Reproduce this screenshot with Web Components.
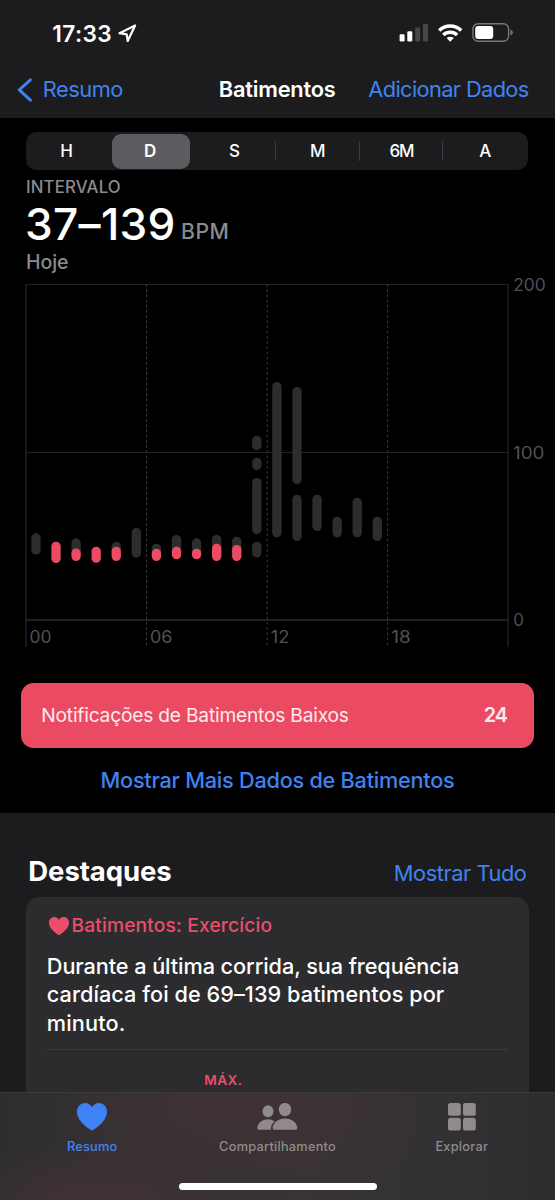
<!DOCTYPE html>
<html lang="pt-BR">
<head>
<meta charset="utf-8">
<title>Batimentos</title>
<style>
html,body{margin:0;background:#000}
body{font-family:Inter,"Liberation Sans",sans-serif;color:#fff;width:555px;height:1200px;overflow:hidden}
</style>
</head>
<body>
<health-screen></health-screen>
<script>
const define = (name, html, setup) => {
  const t = document.createElement('template');
  t.innerHTML = html;
  customElements.define(name, class extends HTMLElement {
    connectedCallback() {
      if (this.shadowRoot) return;
      this.attachShadow({mode: 'open'}).append(t.content.cloneNode(true));
      if (setup) setup.call(this, this.shadowRoot);
    }
  });
};

/* One line of text, tracked so its glyphs span exactly `w` pixels. */
const pen = document.createElement('canvas').getContext('2d');
define('ui-text', `<style>
:host{display:block;white-space:nowrap;flex:none}
span{display:inline-block}
</style><span></span>`, function (root) {
  const s = root.querySelector('span');
  const text = this.getAttribute('text'), size = this.getAttribute('size');
  const weight = this.getAttribute('weight') || 400, w = +this.getAttribute('w');
  pen.font = `${weight} ${size}px Inter, "Liberation Sans", sans-serif`;
  const m = pen.measureText(text);
  const ink = m.actualBoundingBoxLeft + m.actualBoundingBoxRight;
  s.textContent = text;
  s.style.cssText = `font-size:${size}px;font-weight:${weight};margin-left:${m.actualBoundingBoxLeft + .3}px;` +
    (text.length > 1 ? `letter-spacing:${(w - ink) / (text.length - 1)}px` : '');
  this.style.width = w + 'px';
});

define('status-bar', `<style>
:host{display:flex;height:60px;line-height:67px;padding-left:53px;box-sizing:border-box}
svg{display:block}
.loc{margin:23px 0 0 6px;width:21px;height:21px}
.right{margin:21px 0 0 auto;width:116px;height:24px;padding-right:40px}
</style>
<ui-text text="17:33" size="22.600" weight="600" w="58"></ui-text>
<svg class="loc" viewBox="117.500 23 21 21" fill="none" stroke="#fff" stroke-width="2.200" stroke-linejoin="round"><path d="M135.600 25.500 120 33.200 127.200 34.300 128.200 41Z"/></svg>
<svg class="right" viewBox="399 21 116 24">
<g fill="#fff"><rect x="399.600" y="34.300" width="5" height="7.300" rx="1.300"/><rect x="407.300" y="31.300" width="5" height="10.300" rx="1.300"/></g>
<g fill="#48484a"><rect x="415.200" y="27.500" width="5" height="14.100" rx="1.300"/><rect x="423" y="23.700" width="5" height="17.900" rx="1.300"/></g>
<g fill="none" stroke="#fff" stroke-width="3.500"><path d="M439.200 30.400a16 16 0 0 1 22 0"/><path d="M443.300 34.900a10 10 0 0 1 13.800 0"/></g>
<path fill="#fff" d="M446.600 38.100a5.200 5.200 0 0 1 7.200 0l-3.600 3.600z"/>
<rect x="472.900" y="23.700" width="35.700" height="17.600" rx="5.300" fill="none" stroke="#77777a" stroke-width="1.400"/>
<rect x="475.200" y="26" width="18" height="13" rx="3" fill="#fff"/>
<path d="M510.500 29.600q2.400.9 2.400 3t-2.400 3z" fill="#77777a"/>
</svg>`);

define('nav-bar', `<style>
:host{display:flex;height:58px;line-height:59.5px;padding:0 26.5px 0 17px;box-sizing:border-box}
svg{width:16px;height:26px;margin:16.500px 10.5px 0 0}
.link{color:#3f83f0}
.t{margin-left:97.500px}.r{margin-left:auto}
</style>
<svg viewBox="17 76.500 16 26" fill="none" stroke="#3f83f0" stroke-width="3" stroke-linecap="round" stroke-linejoin="round"><path d="M30.400 79.300 19.300 89.400 30.400 99.700"/></svg>
<ui-text class="link" text="Resumo" size="21.800" w="78.500"></ui-text>
<ui-text class="t" text="Batimentos" size="21.800" weight="600" w="116"></ui-text>
<ui-text class="link r" text="Adicionar Dados" size="21.800" w="160.500"></ui-text>`);

define('range-picker', `<style>
:host{display:grid;grid-template-columns:repeat(6,1fr);width:501.5px;height:38px;margin:14px 0 0 26px;background:#1c1c1f;border-radius:10.500px;line-height:38.600px}
.c{display:flex;justify-content:center;padding-right:1.500px}
.sel{background:#5b5b60;border-radius:9px;margin:2px 3.500px 3px 2px;line-height:34.600px;padding-right:0}
.d{position:relative}
.d::after{content:"";position:absolute;right:.6px;top:9px;height:20px;width:1px;background:#3b3b3f}
</style>
<div class="c"><ui-text text="H" size="17" weight="450" w="12"></ui-text></div>
<div class="c sel"><ui-text text="D" size="17" weight="600" w="12"></ui-text></div>
<div class="c d"><ui-text text="S" size="17" weight="450" w="11"></ui-text></div>
<div class="c d"><ui-text text="M" size="17" weight="450" w="14"></ui-text></div>
<div class="c d"><ui-text text="6M" size="17" weight="450" w="24.500"></ui-text></div>
<div class="c"><ui-text text="A" size="17" weight="450" w="12"></ui-text></div>`);

define('range-summary', `<style>
:host{display:block;padding-left:26.700px;height:114px;box-sizing:border-box;color:#8b8b90}
.a{line-height:34.600px;height:30px}
.b{display:flex;height:46px;line-height:48px;color:#fff}
.u{color:#8b8b90;line-height:63px;margin-left:8.500px}
.c{line-height:32px;height:32px}
</style>
<div class="a"><ui-text text="INTERVALO" size="16.800" weight="500" w="92.800"></ui-text></div>
<div class="b"><ui-text text="37–139" size="44.200" weight="500" w="146.500"></ui-text><ui-text class="u" text="BPM" size="21.200" weight="500" w="45.500"></ui-text></div>
<div class="c"><ui-text text="Hoje" size="19.500" weight="500" w="41"></ui-text></div>`);

/* Hourly pulse ranges: [hour, top, bottom, isLow]. */
const RANGES = [[0,533.3,554.5],[1,541.7,563,1],[2,538.3,558],[2,548.5,561,1],[3,546.7,562.8,1],[4,541.7,558],[4,546.7,561,1],
[5,528,557.7],[6,543.7,558],[6,548.7,561,1],[7,535,556],[7,546.7,559.3,1],[8,538.3,556],[8,548.7,559.3,1],[9,535,556],[9,543.7,561,1],
[10,536.7,556],[10,545,561,1],[11,435.8,450.2],[11,457.7,470.2],[11,478,534.2],[11,541.7,557.5],[12,382,537.4],[13,387,484.1],
[13,494.7,541],[14,494.7,531],[15,516.7,537.4],[16,497.7,537.4],[17,516.7,541]];
define('pulse-chart', `<style>
:host{display:block;height:399px}
svg{display:block;width:555px;height:399px;overflow:visible}
text{font-size:16.800px;fill:#505053}
</style>
<svg viewBox="0 284 555 399">
<g stroke="#232325" fill="none"><path d="M25.500 284.500H508.500M25.500 452.500H508.500"/><path d="M26 284V647M508 284V647" stroke="#222224" stroke-width="1.300"/><path d="M26 620H508" stroke="#2b2b2d" stroke-width="1.400"/></g>
<path d="M146.500 284V646M267.200 284V646M387.600 284V646" stroke="#3c3c3e" stroke-width="1" stroke-dasharray="2.600 2.600"/>
<g id="bars"></g>
<text x="513.200" y="290.600" textLength="32.500" lengthAdjust="spacingAndGlyphs">200</text><text x="513" y="458.500" textLength="31.500" lengthAdjust="spacingAndGlyphs">100</text><text x="513.200" y="626.300">0</text>
<text x="29.500" y="643" textLength="22" lengthAdjust="spacingAndGlyphs">00</text><text x="150" y="643" textLength="22.500" lengthAdjust="spacingAndGlyphs">06</text><text x="270.800" y="643" textLength="18.700" lengthAdjust="spacingAndGlyphs">12</text><text x="391.300" y="643" textLength="19.500" lengthAdjust="spacingAndGlyphs">18</text>
</svg>`, function (root) {
  const g = root.querySelector('#bars');
  for (const [h, top, bottom, low] of RANGES) {
    const r = document.createElementNS('http://www.w3.org/2000/svg', 'rect');
    const attrs = {x: 31.3 + h * 20.08, y: top, width: 9.3, height: bottom - top, rx: 4.65, fill: low ? '#ed4a64' : '#2d2d2f'};
    for (const k in attrs) r.setAttribute(k, attrs[k]);
    g.append(r);
  }
});

define('alert-banner', `<style>
:host{display:flex;justify-content:space-between;width:513px;height:64.500px;margin-left:21px;padding:0 26.500px 0 21px;box-sizing:border-box;background:#eb4b62;border-radius:12.500px;line-height:65.600px;color:#fdeaed}
</style>
<ui-text text="Notificações de Batimentos Baixos" size="19.200" w="306.500"></ui-text>
<ui-text text="24" size="19.800" weight="600" w="23.200"></ui-text>`);

define('highlight-card', `<style>
:host{display:block;width:503px;height:220px;margin-left:26px;background:#2c2c2e;border-radius:13.500px;box-sizing:border-box;padding:14px 21px 0}
.h{display:flex;color:#eb4d6a;line-height:29px;height:40px;align-items:flex-start}
svg{width:20px;height:18px;margin:5.500px 3.700px 0 1.500px}
.p{line-height:28.500px;padding-left:.5px;height:97.500px;padding-top:.8px}
.m{border-top:1px solid #3b3b3d;color:#eb4d6a;padding-left:157px;line-height:58.600px;height:60px}
.p ui-text{height:28.500px}
</style>
<div class="h"><svg viewBox="0 0 30 27.500" preserveAspectRatio="none" fill="currentColor"><path d="M15 27.500C13.500 27 0 19 0 8.700 0 3.500 3.500 0 8 0c3 0 5.600 1.600 7 4.300C16.400 1.600 19 0 22 0c4.500 0 8 3.500 8 8.700C30 19 16.500 27 15 27.500Z"/></svg>
<ui-text text="Batimentos: Exercício" size="19.200" weight="550" w="199"></ui-text></div>
<div class="p">
<ui-text text="Durante a última corrida, sua frequência" size="21.700" weight="500" w="410.500"></ui-text>
<ui-text text="cardíaca foi de 69–139 batimentos por" size="21.700" weight="500" w="396"></ui-text>
<ui-text text="minuto." size="21.700" weight="500" w="76"></ui-text></div>
<div class="m"><ui-text text="MÁX." size="13.600" weight="600" w="37.500"></ui-text></div>`);

define('highlights-section', `<style>
:host{display:block;height:279px;overflow:hidden;background:#1c1c1e}
.head{display:flex;height:84.500px;padding:0 29.500px 0 29px;line-height:117px}
.head .l{margin-left:auto;color:#3f83f0;line-height:121px}
</style>
<div class="head"><ui-text text="Destaques" size="27.500" weight="700" w="142"></ui-text><ui-text class="l" text="Mostrar Tudo" size="21.800" w="131"></ui-text></div>
<highlight-card></highlight-card>`);

define('tab-bar', `<style>
:host{display:block;height:108.500px;box-sizing:border-box;border-top:1px solid #3d393b;padding-top:10.500px;
background:radial-gradient(ellipse 150px 75px at 85px 118px,#443136 0,#44313600 100%),radial-gradient(ellipse 210px 90px at 230px 15px,#3f3134 0,#3f313400 100%),linear-gradient(90deg,#2c2e2f 0,#343133 28%,#383335 55%,#333133 78%,#2d2d2f 100%)}
.row{display:flex;height:79.500px}
.i{display:flex;flex-direction:column;align-items:center;color:#8f8b8d;line-height:20px}
.i svg{display:block;height:28px;margin-bottom:4px}
.on{color:#3e82f7}
.home{width:198.500px;height:7px;border-radius:4px;background:#fff;margin-left:178.500px}
</style>
<div class="row">
<div class="i on" style="margin-left:67.700px"><svg width="30" viewBox="0 0 30 28" fill="currentColor"><path d="M15 27.500C13.500 27 0 19 0 8.700 0 3.500 3.500 0 8 0c3 0 5.600 1.600 7 4.300C16.400 1.600 19 0 22 0c4.500 0 8 3.500 8 8.700C30 19 16.500 27 15 27.500Z"/></svg><ui-text text="Resumo" size="12.800" weight="500" w="49.500"></ui-text></div>
<div class="i" style="margin-left:101.600px"><svg width="41" viewBox="257 1103 41 28" fill="currentColor"><ellipse cx="268" cy="1111.200" rx="5.500" ry="6"/><path d="M258.800 1129.800q-1.700 0-1.500-2c.6-5 5-8.600 10.700-8.600 2.700 0 4.700.8 6.400 2q-3.600 3.500-3.600 7.200 0 .8.200 1.400z"/><ellipse cx="285" cy="1109.600" rx="6.200" ry="6.700"/><path d="M274.300 1129.800q-1.800 0-1.700-2c.5-5.400 5.900-9.400 12.400-9.400s11.900 4 12.400 9.400q.1 2-1.700 2z"/></svg><ui-text text="Compartilhamento" size="12.800" weight="500" w="117"></ui-text></div>
<div class="i" style="margin-left:100.300px"><svg width="28" viewBox="0 0 28 28" fill="currentColor"><rect width="12.800" height="12.800" rx="2.600"/><rect x="15" width="12.800" height="12.800" rx="2.600"/><rect y="14.800" width="12.800" height="12.800" rx="2.600"/><rect x="15" y="14.800" width="12.800" height="12.800" rx="2.600"/></svg><ui-text text="Explorar" size="12.800" weight="500" w="51.500"></ui-text></div>
</div><div class="home"></div>`);

define('health-screen', `<style>
:host{display:flex;flex-direction:column;width:555px;height:1200px;overflow:hidden;background:#000}
:host>*{flex:none}
.top{background:#1c1c1e}
.more{display:flex;justify-content:center;height:65px;line-height:65px;color:#3f83f0}
</style>
<div class="top"><status-bar></status-bar><nav-bar></nav-bar></div>
<range-picker></range-picker>
<range-summary></range-summary>
<pulse-chart></pulse-chart>
<alert-banner></alert-banner>
<div class="more"><ui-text text="Mostrar Mais Dados de Batimentos" size="21.700" weight="450" w="352.500"></ui-text></div>
<highlights-section></highlights-section>
<tab-bar></tab-bar>`);
</script>
</body>
</html>
